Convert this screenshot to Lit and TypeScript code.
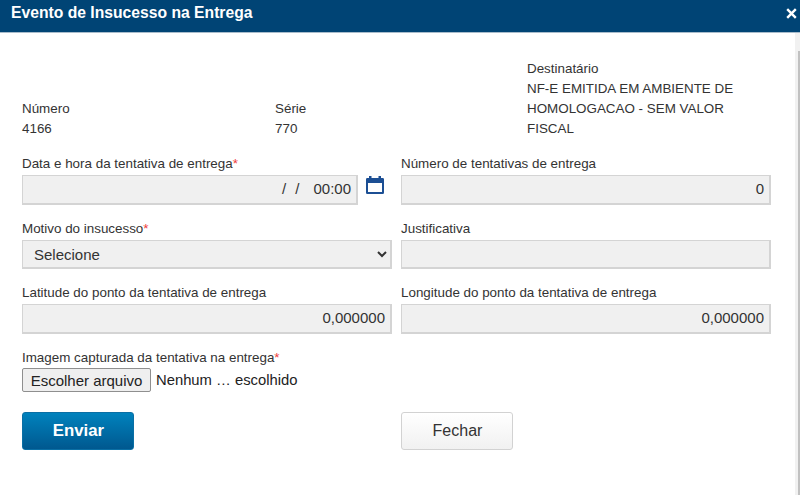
import { LitElement, html, css } from "lit";
import { customElement } from "lit/decorators.js";

@customElement("app-root")
export class AppRoot extends LitElement {
  static styles = css`
    :host {
      display: block;
      width: 800px;
      height: 495px;
      overflow: hidden;
      background: #fff;
      font-family: "Liberation Sans", Arial, sans-serif;
      font-size: 13.4px;
      color: #333;
    }
    * { box-sizing: border-box; }
    .head {
      height: 33px;
      background: #004475;
      border-bottom: 1px solid #a9bccb;
      display: flex;
      align-items: center;
      justify-content: space-between;
      padding: 0 3px 6px 11px;
      color: #fff;
    }
    .head h1 { margin: 0; font-size: 15.7px; font-weight: 700; line-height: 26px; }
    .head svg { display: block; }
    .main { display: flex; height: 462px; }
    .content { flex: 1; padding: 26px 0 0 22px; }
    .scroll { width: 5px; background: #f1f1f1; padding: 18px 0 0 3px; }
    .thumb { height: 100%; background: #c1c1c1; }
    .info {
      display: grid;
      grid-template-columns: 253px 252px 240px;
      align-items: end;
      line-height: 20px;
      font-size: 13.4px;
    }
    .form {
      display: grid;
      grid-template-columns: 370px 370px;
      column-gap: 9px;
      margin-top: 15px;
      row-gap: 14px;
    }
    label { display: block; line-height: 20px; height: 20px; margin-bottom: 1px; font-size: 13.4px; }
    .req { color: #ee3b3b; }
    .input {
      height: 29.5px;
      background: #f0f0f0;
      border: 1px solid #d4d4d4;
      border-bottom-width: 2px;
      border-right-width: 2px;
      display: flex;
      align-items: center;
      justify-content: flex-end;
      padding: 0 5px 1px 10px;
      font-size: 15px;
      color: #333;
      width: 100%;
    }
    .date-row { display: flex; align-items: flex-start; gap: 8px; }
    .date-row .input { width: 336px; flex: none; }
    .date-row .input span { margin-right: 9px; }
    .date-row .input span:last-child { margin: 0 0 0 5px; }
    .date-row svg { display: block; margin-top: 1px; }
    select {
      display: block;
      width: 100%;
      height: 29.5px;
      background: #f0f0f0;
      border: 1px solid #d4d4d4;
      border-bottom-width: 2px;
      border-right-width: 2px;
      border-radius: 0;
      padding: 1px 7px 0;
      font: 15px "Liberation Sans", Arial, sans-serif;
      color: #333;
    }
    .file { display: flex; align-items: center; margin-top: -0.5px; font-size: 14.8px; color: #222; line-height: 24px; }
    .file button {
      width: 129px;
      height: 24px;
      padding: 0;
      margin-right: 5px;
      background: #efefef;
      border: 1px solid #8f8f8f;
      border-radius: 2px;
      font: 15px "Liberation Sans", Arial, sans-serif;
      color: #222;
    }
    .actions {
      display: grid;
      grid-template-columns: 370px 370px;
      column-gap: 9px;
      margin-top: 20px;
    }
    .btn {
      display: block;
      width: 112px;
      height: 38px;
      border-radius: 3px;
      font: 16px "Liberation Sans", Arial, sans-serif;
      padding: 0 0 1px 1px;
    }
    .primary {
      background: linear-gradient(#0082bd, #00588f);
      border: 1px solid #0a6fa5;
      color: #fff;
      font-size: 16.8px;
      font-weight: 700;
    }
    .secondary {
      background: linear-gradient(#fff, #f1f1f1);
      border: 1px solid #d2d2d2;
      color: #333;
    }
  `;

  render() {
    return html`
      <div class="head">
        <h1>Evento de Insucesso na Entrega</h1>
        <svg width="11" height="11" viewBox="0 0 11 11" aria-hidden="true">
          <path d="M1.200 1.200l8.600 8.600M9.800 1.200l-8.600 8.600" stroke="#fff" stroke-width="2.400" fill="none" />
        </svg>
      </div>
      <div class="main">
        <div class="content">
          <div class="info">
            <div>Número<br />4166</div>
            <div>Série<br />770</div>
            <div>Destinatário<br />NF-E EMITIDA EM AMBIENTE DE HOMOLOGACAO - SEM VALOR FISCAL</div>
          </div>
          <div class="form">
            <div>
              <label>Data e hora da tentativa de entrega<span class="req">*</span></label>
              <div class="date-row">
                <div class="input"><span>/</span><span>/</span><span>00:00</span></div>
                <svg width="18" height="18" viewBox="0 0 18 18" aria-hidden="true">
                  <path fill="#1c4f94" d="M3 0h2.500v2h7V0H15v2h1.700A1.300 1.300 0 0 1 18 3.300v13.400a1.300 1.300 0 0 1-1.300 1.300H1.300A1.300 1.300 0 0 1 0 16.700V3.300A1.300 1.300 0 0 1 1.300 2H3z" />
                  <rect x="2" y="7" width="14" height="9" fill="#fff" />
                </svg>
              </div>
            </div>
            <div>
              <label>Número de tentativas de entrega</label>
              <div class="input">0</div>
            </div>
            <div>
              <label>Motivo do insucesso<span class="req">*</span></label>
              <select><option>Selecione</option></select>
            </div>
            <div>
              <label>Justificativa</label>
              <div class="input"></div>
            </div>
            <div>
              <label>Latitude do ponto da tentativa de entrega</label>
              <div class="input">0,000000</div>
            </div>
            <div>
              <label>Longitude do ponto da tentativa de entrega</label>
              <div class="input">0,000000</div>
            </div>
            <div>
              <label>Imagem capturada da tentativa na entrega<span class="req">*</span></label>
              <div class="file"><button>Escolher arquivo</button><span>Nenhum … escolhido</span></div>
            </div>
          </div>
          <div class="actions">
            <button class="btn primary">Enviar</button>
            <button class="btn secondary">Fechar</button>
          </div>
        </div>
        <div class="scroll"><div class="thumb"></div></div>
      </div>
    `;
  }
}
